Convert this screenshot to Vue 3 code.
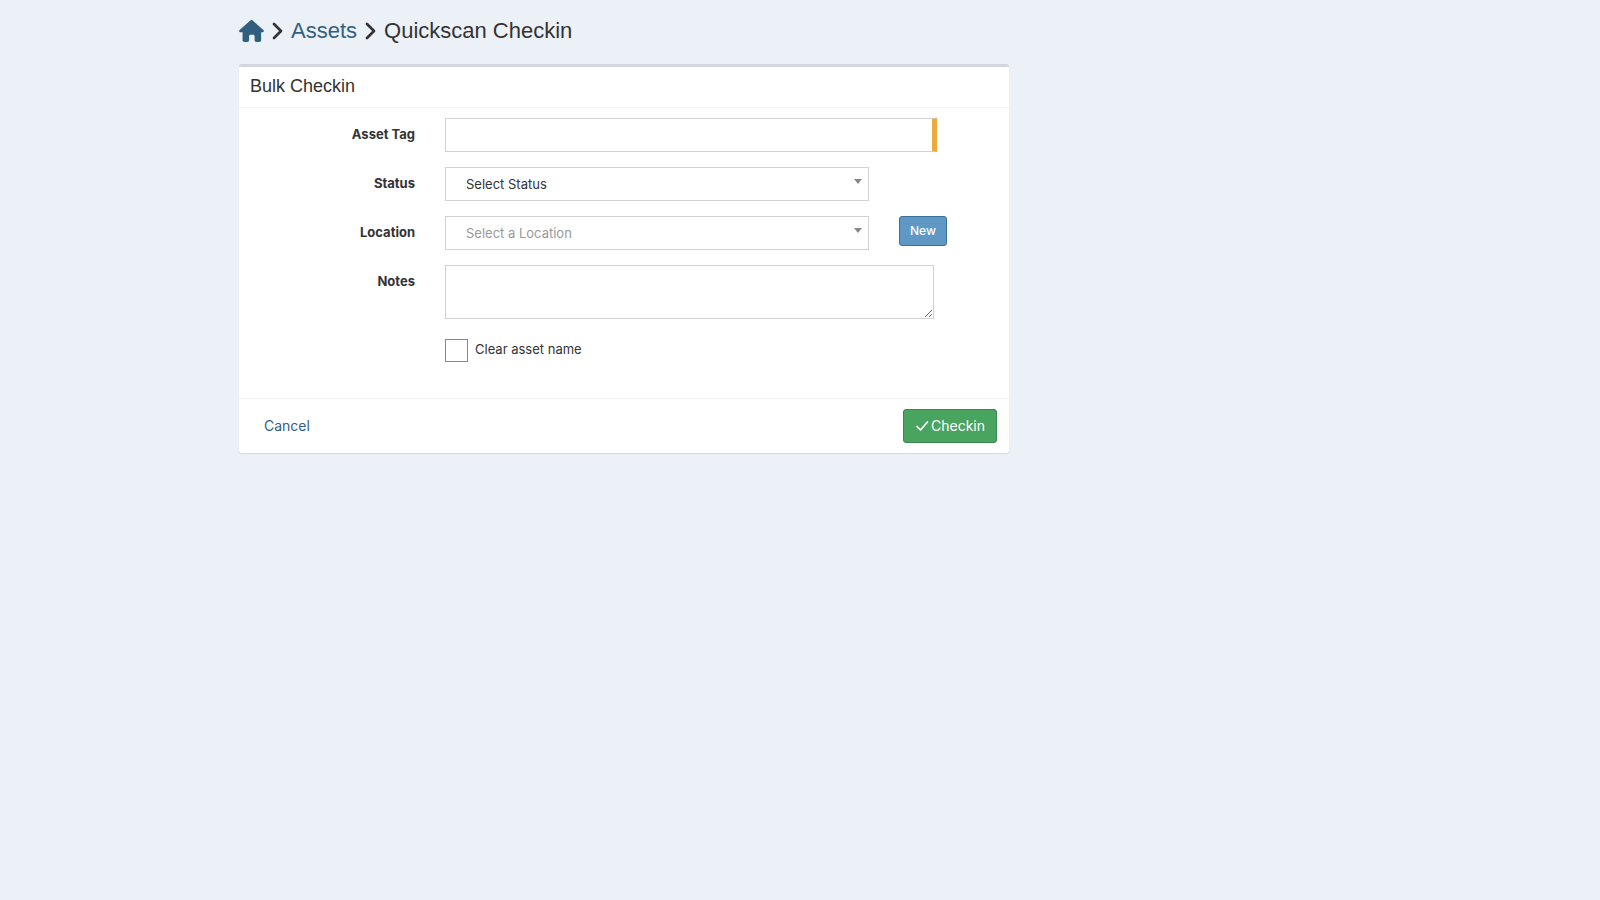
<script setup>
import { ref } from 'vue'

const assetTag = ref('')
const status = ref('')
const location = ref('')
const notes = ref('')
const clearName = ref(false)
</script>

<template>
  <main class="page">
    <nav class="crumbs" aria-label="Breadcrumb">
      <a href="#" class="home" aria-label="Home">
        <svg viewBox="0 0 576 512" width="25" height="22" aria-hidden="true">
          <path fill="currentColor" d="M575.800 255.500c0 18-15 32.100-32 32.100h-32l.7 160.200c0 2.700-.2 5.400-.5 8.100V472c0 22.100-17.900 40-40 40h-72c-22.100 0-40-17.900-40-40V376c0-17.700-14.300-32-32-32h-64c-17.700 0-32 14.300-32 32v96c0 22.100-17.900 40-40 40h-72c-22.100 0-40-17.900-40-40V287.600H32c-18 0-32-14-32-32.100 0-9 3-17 10-24L266.400 8c7-7 15-8 22-8s15 2 21 7l255.400 224.500c8 7 12 15 11 24z" />
        </svg>
      </a>
      <svg class="chevron" viewBox="0 0 11 18" width="11" height="18" aria-hidden="true">
        <path d="M2 2l7 7-7 7" />
      </svg>
      <a href="#">Assets</a>
      <svg class="chevron" viewBox="0 0 11 18" width="11" height="18" aria-hidden="true">
        <path d="M2 2l7 7-7 7" />
      </svg>
      <h1>Quickscan Checkin</h1>
    </nav>

    <form class="box" @submit.prevent>
      <header class="box-header">
        <h2>Bulk Checkin</h2>
      </header>

      <div class="box-body">
        <div class="row">
          <label for="asset-tag">Asset Tag</label>
          <input id="asset-tag" v-model="assetTag" class="field required" type="text" required />
        </div>

        <div class="row">
          <label for="status">Status</label>
          <div class="select">
            <select id="status" v-model="status" class="field">
              <option value="">Select Status</option>
            </select>
          </div>
        </div>

        <div class="row">
          <label for="location">Location</label>
          <div class="select">
            <select id="location" v-model="location" class="field placeholder">
              <option value="">Select a Location</option>
            </select>
          </div>
          <button type="button" class="new">New</button>
        </div>

        <div class="row">
          <label for="notes">Notes</label>
          <textarea id="notes" v-model="notes" class="field notes"></textarea>
        </div>

        <div class="row check-row">
          <label class="check">
            <input v-model="clearName" type="checkbox" />
            <span>Clear asset name</span>
          </label>
        </div>
      </div>

      <footer class="box-footer">
        <a href="#" class="cancel">Cancel</a>
        <button type="submit" class="submit">
          <svg viewBox="0 0 14 12" width="14" height="12" aria-hidden="true">
            <path d="M2 6.500l3.500 3.500 7-8" />
          </svg>
          Checkin
        </button>
      </footer>
    </form>
  </main>
</template>

<style>
body {
  margin: 0;
  background: #ecf0f7;
}
</style>

<style scoped>
.page,
.page * {
  box-sizing: border-box;
}

.page {
  padding: 15px 20px 40px 239px;
  font-family: Inter, "Liberation Sans", sans-serif;
  font-size: 13px;
  line-height: 20px;
  color: #333;
}

a {
  color: #31607f;
  text-decoration: none;
}

.crumbs {
  display: flex;
  align-items: center;
  gap: 8px;
  height: 32px;
  margin-bottom: 17px;
  font-family: "Liberation Sans", Arial, sans-serif;
  font-size: 22px;
  line-height: 32px;
}

.home {
  display: flex;
}

.chevron {
  flex: none;
}

.chevron path,
.submit path {
  fill: none;
  stroke: currentColor;
  stroke-width: 2.700;
  stroke-linecap: round;
  stroke-linejoin: round;
}

h1,
h2 {
  margin: 0;
  font: inherit;
}

.box {
  max-width: 770px;
  background: #fff;
  border-top: 3px solid #d2d6de;
  border-radius: 3px;
  box-shadow: 0 1px 1px rgba(0, 0, 0, 0.1);
}

.box-header {
  padding: 9px 11px 11px;
  border-bottom: 1px solid #f4f4f4;
}

.box-header h2 {
  font-family: "Liberation Sans", Arial, sans-serif;
  font-size: 18px;
  line-height: 20px;
}

.box-body {
  padding: 10px 0 21px;
}

.row {
  display: grid;
  grid-template-columns: 176px 424px 1fr;
  column-gap: 30px;
  align-items: start;
  padding-right: 63px;
  margin-bottom: 15px;
}

.row > label:first-child:not(.check) {
  padding-top: 6px;
  font-weight: 700;
  text-align: right;
}

.field {
  display: block;
  width: 100%;
  height: 34px;
  margin: 0;
  padding: 6px 12px;
  background: #fff;
  border: 1px solid #d0d3d6;
  border-radius: 0;
  outline: none;
  box-shadow: none;
  font: inherit;
  color: #333;
}

.required {
  grid-column: 2 / 4;
  width: auto;
  margin-right: 9px;
  border-right: 5px solid #efa83c;
}

.select {
  position: relative;
}

.select .field {
  appearance: none;
  padding: 0 20px;
}

.select .placeholder {
  color: #999;
}

.select::after {
  content: "";
  position: absolute;
  top: 12px;
  right: 7px;
  border: 4px solid transparent;
  border-top: 5px solid #888;
  border-bottom: 0;
  pointer-events: none;
}

.notes {
  grid-column: 2 / 4;
  width: auto;
  height: 54px;
  margin-right: 12px;
  resize: vertical;
}

button {
  border: 1px solid;
  border-radius: 3px;
  font-family: inherit;
  color: #fff;
  cursor: pointer;
}

.new {
  justify-self: start;
  height: 30px;
  padding: 0 10px 1px;
  background: #5f98c5;
  border-color: #3b7099;
  font-size: 12px;
  font-weight: 500;
}

.check-row {
  padding-top: 5px;
}

.check {
  grid-column: 2;
  display: flex;
  gap: 7px;
}

.check input {
  appearance: none;
  flex: none;
  width: 23px;
  height: 23px;
  margin: 0;
  background: #fff;
  border: 1px solid #888;
}

.check input:checked {
  background: #31607f;
}

.box-footer {
  display: flex;
  align-items: center;
  justify-content: space-between;
  padding: 10px 12px;
  border-top: 1px solid #f4f4f4;
  font-size: 14px;
}

.cancel {
  padding: 6px 13px;
}

.submit {
  display: flex;
  align-items: center;
  gap: 2px;
  height: 34px;
  padding: 0 11px 1px;
  background: #49a45f;
  border-color: #358a4c;
  font-size: 14px;
}

.submit path {
  stroke-width: 1.700;
}
</style>
